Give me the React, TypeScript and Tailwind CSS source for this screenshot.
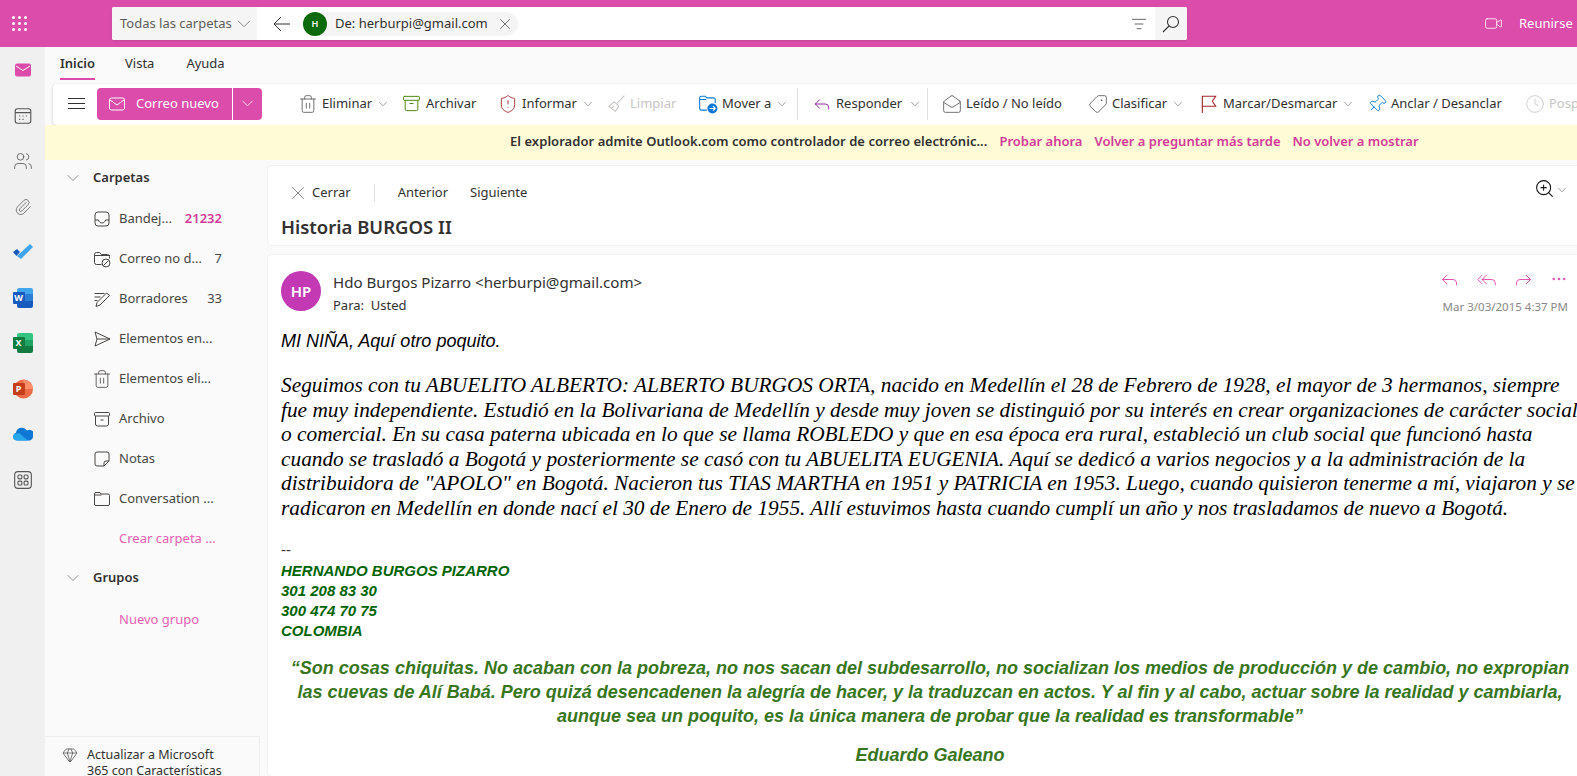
import type { ReactNode } from 'react';
import { ChevronDown, Trash2, Archive, X, MailOpen, Tag, Pin, Clock, Reply, ReplyAll, Forward, MoreHorizontal, ZoomIn, Video, ListFilter, Users, Paperclip, ShieldAlert, Gem } from 'lucide-react';

// iconos de contorno dibujados a mano (estilo Fluent)
const Line = ({ size = 18, className = '', children }: { size?: number; className?: string; children: ReactNode }) => (
  <svg width={size} height={size} viewBox="0 0 18 18" fill="none" stroke="currentColor" strokeWidth="1" className={`shrink-0 ${className}`}>
    {children}
  </svg>
);

const MailIcon = ({ size = 18 }: { size?: number }) => (
  <Line size={size}>
    <rect x="1.5" y="3" width="15" height="12" rx="2" />
    <path d="M2 5l7 5 7-5" />
  </Line>
);

const folderIcons = {
  inbox: (
    <Line>
      <rect x="2" y="2" width="14" height="14" rx="3" />
      <path d="M2 10h3.500c.5 2 2 3 3.500 3s3-1 3.500-3H16" />
    </Line>
  ),
  junk: (
    <Line>
      <path d="M1.500 4.500a2 2 0 0 1 2-2h3l2 2h6a2 2 0 0 1 2 2v2M1.500 4.500v8a2 2 0 0 0 2 2h5M1.500 5.500h15" />
      <circle cx="13" cy="13" r="4" />
      <path d="M10.500 15.500l5-5" />
    </Line>
  ),
  drafts: (
    <Line>
      <path d="M1.500 3.500h10M1.500 7h6M1.500 10.500h3M3 16.500l1-4L13.500 3l3 2.500L7 15z" />
    </Line>
  ),
  sent: (
    <Line>
      <path d="M2 2l15 7-15 7 2-7zM4 9h13" />
    </Line>
  ),
  archive: (
    <Line>
      <rect x="1.500" y="2.500" width="15" height="3.500" rx="1" />
      <path d="M2.500 6v8a2 2 0 0 0 2 2h9a2 2 0 0 0 2-2V6M7.500 10h3" />
    </Line>
  ),
  note: (
    <Line>
      <path d="M4 2h10a2 2 0 0 1 2 2v7l-5 5H4a2 2 0 0 1-2-2V4a2 2 0 0 1 2-2zM16 11h-3a2 2 0 0 0-2 2v3" />
    </Line>
  ),
  folder: (
    <Line>
      <path d="M1.500 4a1.500 1.500 0 0 1 1.500-1.500h4l1 1.500h7a1.500 1.500 0 0 1 1.500 1.500v8.500a1.500 1.500 0 0 1-1.500 1.500H3A1.500 1.500 0 0 1 1.500 14zM1.500 5h7" />
    </Line>
  ),
};

const ribbon = [
  { label: 'Eliminar', icon: <Trash2 size={20} strokeWidth={1} className="text-[#555]" />, w: 'w-[104px]', caret: true },
  { label: 'Archivar', icon: <Archive size={19} strokeWidth={1.2} className="text-[#498205]" />, w: 'w-[96px]' },
  { label: 'Informar', icon: <ShieldAlert size={20} strokeWidth={1.1} className="text-[#a4262c]" />, w: 'w-[108px]', caret: true },
  {
    label: 'Limpiar',
    icon: (
      <Line size={20} className="text-[#c8c6c4]">
        <path d="M16.500 1.500L10 8.500M7.500 7l4 4-3 4.500-6-4.500zM5 13l2-2" />
      </Line>
    ),
    w: 'w-[92px]',
    off: true,
  },
  {
    label: 'Mover a',
    icon: (
      <svg width="20" height="20" viewBox="0 0 18 18" fill="none" stroke="#0f78d4" strokeWidth="1">
        <path d="M8 14.500H3A1.500 1.500 0 0 1 1.500 13V3.500A1.500 1.500 0 0 1 3 2h3.500l1.500 1.500h6A1.500 1.500 0 0 1 15.500 5v3M1.500 5h6" />
        <circle cx="13" cy="13" r="4.500" fill="#0f78d4" stroke="none" />
        <path d="M10.500 13h5M13.500 11l2 2-2 2" stroke="white" />
      </svg>
    ),
    w: 'w-[97px]',
    caret: true,
  },
];

const ribbon2 = [
  { label: 'Leído / No leído', icon: <MailOpen size={20} strokeWidth={1} className="text-[#555]" />, w: 'w-[146px]' },
  { label: 'Clasificar', icon: <Tag size={20} strokeWidth={1} className="-scale-x-100 text-[#555]" />, w: 'w-[111px]', caret: true },
  {
    label: 'Marcar/Desmarcar',
    icon: (
      <Line size={20} className="text-[#a4262c]">
        <path d="M3 17V2h12l-3 4.500 3 4.500H3" />
      </Line>
    ),
    w: 'w-[168px]',
    caret: true,
  },
  { label: 'Anclar / Desanclar', icon: <Pin size={20} strokeWidth={1.1} className="rotate-45 text-[#0f78d4]" />, w: 'w-[158px]' },
  { label: 'Posponer', icon: <Clock size={20} strokeWidth={1} className="text-[#c8c6c4]" />, w: 'w-[90px]', off: true },
];

const folders = [
  { label: 'Bandej...', icon: folderIcons.inbox, count: '21232', hot: true },
  { label: 'Correo no d...', icon: folderIcons.junk, count: '7' },
  { label: 'Borradores', icon: folderIcons.drafts, count: '33' },
  { label: 'Elementos en...', icon: folderIcons.sent },
  { label: 'Elementos eli...', icon: <Trash2 size={20} strokeWidth={1} className="-ml-[1px]" /> },
  { label: 'Archivo', icon: folderIcons.archive },
  { label: 'Notas', icon: folderIcons.note },
  { label: 'Conversation ...', icon: folderIcons.folder },
];

const OfficeTile = ({ letter, bands, front }: { letter: string; bands: string[]; front: string }) => (
  <div className="relative h-[20px] w-[20px]">
    <div className="ml-[4px] flex h-[20px] w-[16px] flex-col overflow-hidden rounded-[2px]">
      {bands.map((b) => (
        <div key={b} className={`flex-1 ${b}`} />
      ))}
    </div>
    <div className={`absolute left-0 top-[4px] flex h-[12px] w-[12px] items-center justify-center rounded-[1px] text-[9px] font-bold text-white ${front}`}>
      {letter}
    </div>
  </div>
);

const RibbonItem = ({ item }: { item: { label: string; icon: ReactNode; w: string; caret?: boolean; off?: boolean } }) => (
  <div className={`flex shrink-0 items-center ${item.w}`}>
    <span className="-ml-[2px] flex w-[24px] shrink-0">{item.icon}</span>
    <span className={`whitespace-nowrap ${item.off ? 'text-[#c8c6c4]' : 'text-[#323130]'}`}>{item.label}</span>
    {item.caret && <ChevronDown size={14} strokeWidth={1} className="ml-[4px] shrink-0 text-[#605e5c]" />}
  </div>
);

export default function App() {
  return (
    <div className="flex h-[776px] w-[1577px] flex-col overflow-hidden bg-[#fafafa] font-['Noto_Sans',sans-serif] text-[13px] text-[#323130]">
      {/* barra superior */}
      <header className="flex h-[47px] shrink-0 items-center bg-[#dc4dab]">
        <div className="grid w-[112px] shrink-0 grid-cols-3 gap-[3px] pl-[12px] pr-[85px]">
          {Array.from({ length: 9 }).map((_, i) => (
            <span key={i} className="h-[3px] w-[3px] rounded-full bg-white" />
          ))}
        </div>
        <div className="flex h-[33px] w-[1075px] shrink-0 items-center overflow-hidden rounded-[2px] bg-white shadow-sm">
          <div className="flex h-full w-[145px] items-center justify-between bg-[#f5f5f5] pl-2 pr-[2px] text-[#605e5c]">
            Todas las carpetas
            <ChevronDown size={22} strokeWidth={0.8} />
          </div>
          <svg width="18" height="18" viewBox="0 0 18 18" fill="none" stroke="#323130" className="ml-[16px]">
            <path d="M1 9h16M8 2L1 9l7 7" />
          </svg>
          <div className="ml-[12px] flex h-[24px] w-[215px] items-center rounded-full bg-[#f5f5f5]">
            <span className="flex h-[24px] w-[24px] items-center justify-center rounded-full bg-[#0b6a0b] text-[9px] font-semibold text-white">H</span>
            <span className="ml-2">De: herburpi@gmail.com</span>
            <X size={18} strokeWidth={0.9} className="ml-[8px]" />
          </div>
          <div className="flex-1" />
          <ListFilter size={16} strokeWidth={1.1} className="mr-[8px]" />
          <div className="flex h-full w-[32px] items-center justify-center bg-[#f5f5f5]">
            <svg width="18" height="18" viewBox="0 0 18 18" fill="none" stroke="#323130" strokeWidth="1.1">
              <circle cx="11" cy="7" r="5.500" />
              <path d="M7 11l-6 6" />
            </svg>
          </div>
        </div>
        <Video size={19} strokeWidth={1} className="ml-[297px] text-white" />
        <span className="ml-[16px] whitespace-nowrap text-white">Reunirse</span>
      </header>

      <div className="flex min-h-0 flex-1">
        {/* riel de apps */}
        <nav className="flex w-[45px] shrink-0 flex-col items-center gap-[25.5px] bg-[#f0f0f0] pt-[13px]">
          <svg width="20" height="20" viewBox="0 0 20 20" fill="none">
            <rect x="2" y="3.500" width="16" height="13" rx="2" fill="#dc4dab" />
            <path d="M3 6l7 4.500L17 6" stroke="white" />
          </svg>
          <Line size={20} className="text-[#555]">
            <rect x="2" y="2.500" width="14" height="13" rx="2" />
            <path d="M2 6h14M5.500 9h1M8.500 9h1M11.500 9h1M5.500 12h1M8.500 12h1" />
          </Line>
          <Users size={20} strokeWidth={1} className="text-[#555]" />
          <Paperclip size={18} strokeWidth={1} className="my-[1px] text-[#555]" />
          <svg width="20" height="20" viewBox="0 0 20 20">
            <path d="M0 10l4-3 3 3-3.500 4z" fill="#185abd" />
            <path d="M4 14L17 2l3 3L8 17z" fill="#41a5ee" />
          </svg>
          <OfficeTile letter="W" bands={['bg-[#41a5ee]', 'bg-[#2b7cd3]', 'bg-[#185abd]']} front="bg-[#185abd]" />
          <OfficeTile letter="X" bands={['bg-[#33c481]', 'bg-[#21a366]', 'bg-[#107c41]']} front="bg-[#107c41]" />
          <div className="relative h-[20px] w-[20px]">
            <svg width="20" height="20" viewBox="0 0 20 20">
              <circle cx="10.500" cy="10" r="9.500" fill="#ed6c47" />
              <path d="M10.500 .5a9.500 9.500 0 0 1 9.500 9.500h-9.500z" fill="#ff8f6b" />
            </svg>
            <div className="absolute left-0 top-[4px] flex h-[12px] w-[12px] items-center justify-center rounded-[1px] bg-[#c43e1c] text-[9px] font-bold text-white">P</div>
          </div>
          <svg width="20" height="20" viewBox="0 0 20 20">
            <path d="M4 16.500a4 4 0 0 1-1-7.800A6 6 0 0 1 14 6.500a4.500 4.500 0 0 1 6 6.500 4 4 0 0 1-3 3.500z" fill="#0f78d4" />
            <path d="M5 16.500c-2 0-5-1-5-3.500s2-3.500 4-3.500c3-1 4 1 6 3l5 4z" fill="#28a8ea" />
          </svg>
          <Line size={20} className="text-[#555]">
            <rect x="1.500" y="1.500" width="15" height="15" rx="3" />
            <rect x="4.500" y="4.500" width="3.500" height="3.500" rx="1" />
            <rect x="10" y="4.500" width="3.500" height="3.500" rx="1" />
            <rect x="4.500" y="10" width="3.500" height="3.500" rx="1" />
            <rect x="10" y="10" width="3.500" height="3.500" rx="1" />
          </Line>
        </nav>

        <div className="flex min-w-0 flex-1 flex-col">
          {/* pestañas */}
          <div className="flex h-[37px] shrink-0 items-start pl-[15px] pt-[7px]">
            <span className="mr-[30px] border-b-2 border-[#dc4dab] pb-[4px] font-semibold">Inicio</span>
            <span className="mr-[32px]">Vista</span>
            <span>Ayuda</span>
          </div>

          {/* cinta */}
          <div className="ml-[8px] flex h-[41px] shrink-0 items-center overflow-hidden rounded-l-[4px] bg-white pb-[2px] pl-[15px] shadow-[0_1px_3px_rgba(0,0,0,0.2)]">
            <svg width="17" height="17" viewBox="0 0 17 17" stroke="#323130" className="shrink-0">
              <path d="M0 3.500h17M0 8.500h17M0 13.500h17" />
            </svg>
            <div className="ml-[12px] flex h-[32px] w-[165px] shrink-0 overflow-hidden rounded-[4px] bg-[#dc4dab] text-white">
              <div className="flex w-[136px] items-center border-r border-white pl-[11px]">
                <MailIcon />
                <span className="ml-[10px]">Correo nuevo</span>
              </div>
              <div className="flex flex-1 items-center justify-center">
                <ChevronDown size={19} strokeWidth={1} />
              </div>
            </div>
            <div className="ml-[38px] flex shrink-0 items-center">
              {ribbon.map((item) => (
                <RibbonItem key={item.label} item={item} />
              ))}
            </div>
            <div className="h-[32px] w-px shrink-0 bg-[#e1dfdd]" />
            <div className="ml-[16px] flex w-[113px] shrink-0 items-center">
              <Reply size={20} strokeWidth={1.1} className="-ml-[2px] mr-[4px] shrink-0 text-[#881798]" />
              Responder
              <ChevronDown size={14} strokeWidth={1} className="ml-[6px] shrink-0 text-[#605e5c]" />
            </div>
            <div className="h-[32px] w-px shrink-0 bg-[#e1dfdd]" />
            <div className="ml-[16px] flex shrink-0 items-center">
              {ribbon2.map((item) => (
                <RibbonItem key={item.label} item={item} />
              ))}
            </div>
          </div>

          {/* aviso */}
          <div className="flex h-[35px] shrink-0 items-center gap-[12px] bg-[#fffbd6] pb-[2px] pl-[465px] font-semibold text-[#323130]">
            <span className="tracking-[0.05px]">El explorador admite Outlook.com como controlador de correo electrónic...</span>
            <span className="text-[#d33a97]">Probar ahora</span>
            <span className="text-[#d33a97]">Volver a preguntar más tarde</span>
            <span className="text-[#d33a97]">No volver a mostrar</span>
          </div>

          <div className="flex min-h-0 flex-1">
            {/* carpetas */}
            <aside className="flex w-[223px] shrink-0 flex-col">
              <div className="mb-[3px] flex h-[36px] shrink-0 items-center pl-[18px] font-semibold">
                <ChevronDown size={20} strokeWidth={0.8} className="mr-[10px] text-[#605e5c]" />
                Carpetas
              </div>
              {folders.map((f) => (
                <div key={f.label} className="flex h-[40px] shrink-0 items-center pl-[48px] pr-[46px] text-[#484644]">
                  <span className="flex w-[26px] shrink-0">{f.icon}</span>
                  <span className="flex-1 whitespace-nowrap">{f.label}</span>
                  {f.count && <span className={f.hot ? 'font-semibold text-[#d33a97]' : ''}>{f.count}</span>}
                </div>
              ))}
              <div className="flex h-[40px] shrink-0 items-center pl-[74px] text-[#e85eb5]">Crear carpeta ...</div>
              <div className="flex h-[38px] shrink-0 items-center pl-[18px] font-semibold">
                <ChevronDown size={20} strokeWidth={0.8} className="mr-[10px] text-[#605e5c]" />
                Grupos
              </div>
              <div className="flex h-[45px] shrink-0 items-center pl-[74px] text-[#e85eb5]">Nuevo grupo</div>
              <div className="flex-1" />
              <div className="mr-[8px] flex h-[40px] shrink-0 gap-[9px] overflow-hidden border-r border-t border-[#eee] pl-[17px] pt-[10px] text-[12.5px] leading-[16px]">
                <Gem size={16} strokeWidth={1.2} className="shrink-0 text-[#555]" />
                <span className="w-[150px]">Actualizar a Microsoft 365 con Características</span>
              </div>
            </aside>

            {/* lectura */}
            <main className="flex min-w-0 flex-1 flex-col gap-[10px] pt-[6px]">
              <div className="h-[79px] shrink-0 rounded-l-[4px] bg-white pl-[13px] pr-[8px] pt-[17px] shadow-[0_0_2px_rgba(0,0,0,0.12)]">
                <div className="flex h-[20px] items-center">
                  <X size={22} strokeWidth={0.8} className="ml-[6px] mr-[3px] text-[#605e5c]" />
                  <span>Cerrar</span>
                  <span className="mx-[23px] h-[18px] w-px bg-[#e1dfdd]" />
                  <span className="mr-[22px]">Anterior</span>
                  <span>Siguiente</span>
                  <div className="flex-1" />
                  <ZoomIn size={21} strokeWidth={1.2} className="-mt-[10px] text-[#111]" />
                  <ChevronDown size={14} strokeWidth={1} className="-mt-[6px] text-[#605e5c]" />
                </div>
                <h1 className="mt-[12px] text-[18.5px] font-semibold leading-[24px]">Historia BURGOS II</h1>
              </div>

              <div className="min-h-0 flex-1 rounded-l-[4px] bg-white pl-[13px] pt-[16px] shadow-[0_0_2px_rgba(0,0,0,0.12)]">
                <div className="flex h-[40px]">
                  <div className="flex h-[40px] w-[40px] items-center justify-center rounded-full bg-[#c239b3] text-[15px] font-semibold text-white">HP</div>
                  <div className="ml-[12px] flex-1 pt-[1px]">
                    <div className="text-[15.1px] leading-[20px]">Hdo Burgos Pizarro &lt;herburpi@gmail.com&gt;</div>
                    <div className="mt-[5px] leading-[16px]">Para:&nbsp; Usted</div>
                  </div>
                  <div className="mr-[9px] flex flex-col items-end">
                    <div className="-mt-[2px] flex h-[20px] items-center gap-[16px] text-[#e34db0]">
                      <Reply size={21} strokeWidth={1.1} />
                      <ReplyAll size={21} strokeWidth={1.1} />
                      <Forward size={21} strokeWidth={1.1} />
                      <MoreHorizontal size={18} strokeWidth={1.4} />
                    </div>
                    <div className="mt-[10px] whitespace-nowrap text-[11.5px] leading-[16px] text-[#8a8886]">Mar 3/03/2015 4:37 PM</div>
                  </div>
                </div>

                <div className="mt-[19px] w-[1298px] font-['Liberation_Serif',serif] text-[21.33px] italic leading-[24.6px] text-black">
                  <p className="mb-[20px] font-['Liberation_Sans',sans-serif] text-[18px] leading-[23px]">MI NIÑA, Aquí otro poquito.</p>
                  <p className="mb-[19px]">
                    Seguimos con tu ABUELITO ALBERTO: ALBERTO BURGOS ORTA, nacido en Medellín el 28 de Febrero de 1928, el mayor de 3 hermanos, siempre fue muy independiente. Estudió en la Bolivariana de Medellín y desde muy joven se distinguió por su interés en crear organizaciones de carácter social o comercial. En su casa paterna ubicada en lo que se llama ROBLEDO y que en esa época era rural, estableció un club social que funcionó hasta cuando se trasladó a Bogotá y posteriormente se casó con tu ABUELITA EUGENIA. Aquí se dedicó a varios negocios y a la administración de la distribuidora de "APOLO" en Bogotá. Nacieron tus TIAS MARTHA en 1951 y PATRICIA en 1953. Luego, cuando quisieron tenerme a mí, viajaron y se radicaron en Medellín en donde nací el 30 de Enero de 1955. Allí estuvimos hasta cuando cumplí un año y nos trasladamos de nuevo a Bogotá.
                  </p>
                </div>
                <div className="font-['Liberation_Sans',sans-serif] text-[15px] leading-[20px]">
                  <div className="h-[21px] text-[#323130]">--</div>
                  <div className="font-bold italic text-[#006400]">
                    <div>HERNANDO BURGOS PIZARRO</div>
                    <div>301 208 83 30</div>
                    <div>300 474 70 75</div>
                    <div>COLOMBIA</div>
                  </div>
                  <div className="mt-[15px] w-[1298px] text-center text-[18px] font-bold italic leading-[24px] text-[#38761d]">
                    <p>“Son cosas chiquitas. No acaban con la pobreza, no nos sacan del subdesarrollo, no socializan los medios de producción y de cambio, no expropian</p>
                    <p>las cuevas de Alí Babá. Pero quizá desencadenen la alegría de hacer, y la traduzcan en actos. Y al fin y al cabo, actuar sobre la realidad y cambiarla,</p>
                    <p>aunque sea un poquito, es la única manera de probar que la realidad es transformable”</p>
                    <p className="mt-[15px]">Eduardo Galeano</p>
                  </div>
                </div>
              </div>
            </main>
          </div>
        </div>
      </div>
    </div>
  );
}
